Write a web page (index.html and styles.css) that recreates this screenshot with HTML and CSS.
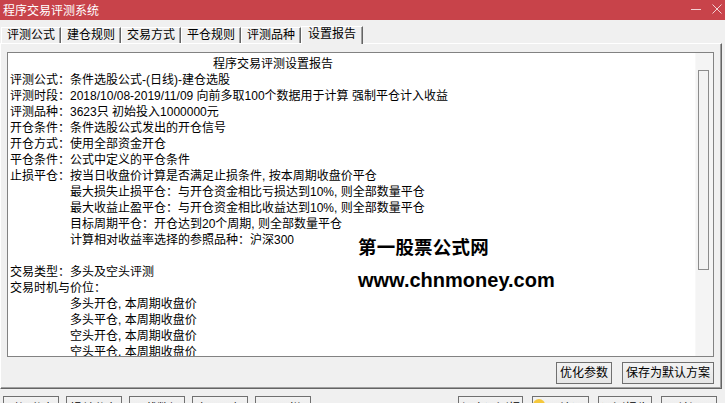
FILE: index.html
```html
<!DOCTYPE html>
<html lang="zh-CN">
<head>
    <meta charset="UTF-8">
    <title>程序交易评测系统</title>
    <link rel="stylesheet" href="styles.css">
</head>
<body>

<div class="window">
    <div class="titlebar">
        <span class="title">程序交易评测系统</span>
        <div class="winbtns">
            <svg width="11" height="11" viewBox="0 0 11 11"><path d="M0 5.5H10" stroke="#f3d2d4" stroke-width="1"/></svg>
            <svg width="10" height="11" viewBox="0 0 10 11"><path d="M0.5 0.5L9.5 9.5M9.5 0.5L0.5 9.5" stroke="#f3d2d4" stroke-width="1"/></svg>
        </div>
    </div>

    <div class="tabs">
        <div class="tab">评测公式</div>
        <div class="tab">建仓规则</div>
        <div class="tab">交易方式</div>
        <div class="tab">平仓规则</div>
        <div class="tab">评测品种</div>
        <div class="tab active">设置报告</div>
    </div>

    <div class="panel">
        <div class="report">
            <div class="report-text">
                <div class="line heading">程序交易评测设置报告</div>
                <div class="line">评测公式：条件选股公式-(日线)-建仓选股</div>
                <div class="line">评测时段：2018/10/08-2019/11/09 向前多取100个数据用于计算 强制平仓计入收益</div>
                <div class="line">评测品种：3623只 初始投入1000000元</div>
                <div class="line">开仓条件：条件选股公式发出的开仓信号</div>
                <div class="line">开仓方式：使用全部资金开仓</div>
                <div class="line">平仓条件：公式中定义的平仓条件</div>
                <div class="line">止损平仓：按当日收盘价计算是否满足止损条件, 按本周期收盘价平仓</div>
                <div class="line indent">最大损失止损平仓：与开仓资金相比亏损达到10%, 则全部数量平仓</div>
                <div class="line indent">最大收益止盈平仓：与开仓资金相比收益达到10%, 则全部数量平仓</div>
                <div class="line indent">目标周期平仓：开仓达到20个周期, 则全部数量平仓</div>
                <div class="line indent">计算相对收益率选择的参照品种：沪深300</div>
                <div class="line">&nbsp;</div>
                <div class="line">交易类型：多头及空头评测</div>
                <div class="line">交易时机与价位：</div>
                <div class="line indent">多头开仓, 本周期收盘价</div>
                <div class="line indent">多头平仓, 本周期收盘价</div>
                <div class="line indent">空头开仓, 本周期收盘价</div>
                <div class="line indent">空头平仓, 本周期收盘价</div>
            </div>
            <div class="scrollbar">
                <div class="thumb"></div>
            </div>
            <div class="watermark">
                <div class="wm-name">第一股票公式网</div>
                <div class="wm-url">www.chnmoney.com</div>
            </div>
        </div>
        <div class="panel-actions">
            <button class="btn btn-opt">优化参数</button>
            <button class="btn btn-save">保存为默认方案</button>
        </div>
    </div>

    <div class="footer">
        <div class="footer-left">
            <button class="btn fbtn">时间分布</button>
            <button class="btn fbtn">损益分布</button>
            <button class="btn fbtn">下载数据</button>
            <button class="btn fbtn">交易明细</button>
            <button class="btn fbtn">工具栏</button>
        </div>
        <div class="footer-right">
            <button class="btn fbtn w65">组合评测报告</button>
            <button class="btn fbtn w57"><span class="dot"></span>开始评测</button>
            <button class="btn fbtn w54">评测报告</button>
            <button class="btn fbtn">关闭</button>
        </div>
    </div>
</div>

</body>
</html>
```

FILE: styles.css
```css
body {
    margin: 0;
    background-color: #f0f0f0;
    font-family: "Liberation Sans", "Noto Sans CJK SC", sans-serif;
    font-size: 12px;
    color: #000;
    overflow: hidden;
}
.window {
    width: 725px;
    height: 403px;
    overflow: hidden;
}
.titlebar {
    height: 20px;
    background-color: #c8434a;
    color: #fff;
    display: flex;
    justify-content: space-between;
    align-items: center;
    padding: 0 3px 0 3px;
}
.title {
    line-height: 20px;
    margin-top: 1px;
}
.winbtns {
    display: flex;
    align-items: center;
    gap: 10px;
    margin-top: -2px;
}
.tabs {
    height: 23px;
    display: flex;
    align-items: flex-end;
    padding-left: 1px;
}
.tab {
    height: 15px;
    line-height: 15px;
    padding: 0 5px;
    border-left: 1px solid #fff;
    border-top: 1px solid #fff;
    border-right: 1px solid #646464;
    box-shadow: inset -1px 0 #a0a0a0;
    white-space: nowrap;
}
.tab.active {
    height: 17px;
    line-height: 15px;
    padding: 0 6px;
    margin-bottom: -1px;
    background-color: #f0f0f0;
    position: relative;
}
.panel {
    height: 344px;
    width: 720px;
    border-top: 1px solid #fff;
    border-left: 1px solid #fff;
    border-right: 1px solid #646464;
    border-bottom: 1px solid #646464;
    box-shadow: inset -1px -1px #a0a0a0;
    padding: 8px 7px 4px 6px;
    box-sizing: border-box;
    width: 722px;
    height: 346px;
}
.report {
    position: relative;
    height: 305px;
    border: 1px solid #828282;
    box-sizing: border-box;
    background-color: #fff;
    display: flex;
}
.report-text {
    flex: 1;
    padding: 3px 0 0 2px;
    overflow: hidden;
}
.line {
    height: 16px;
    line-height: 16px;
    white-space: nowrap;
}
.line.heading {
    padding-left: 203px;
}
.line.indent {
    padding-left: 60px;
}
.scrollbar {
    width: 18px;
    background-color: #f4f4f4;
    border-left: 1px solid #f8f8f8;
    box-sizing: border-box;
    padding: 17px 0 0 2px;
}
.thumb {
    width: 11px;
    height: 200px;
    box-sizing: border-box;
    border: 1px solid #8c8c8c;
    background-color: #f3f3f3;
}
.watermark {
    position: absolute;
    left: 350px;
    top: 176px;
    line-height: 34px;
    font-weight: bold;
    pointer-events: none;
}
.wm-name {
    font-family: "Noto Sans CJK SC", sans-serif;
    font-size: 18.5px;
    letter-spacing: 0.2px;
}
.wm-url {
    font-family: "Liberation Sans", sans-serif;
    font-size: 20px;
}
.panel-actions {
    display: flex;
    justify-content: flex-end;
    gap: 10px;
    margin-top: 5px;
}
.btn {
    height: 22px;
    padding: 0;
    border: 1px solid #707070;
    background: linear-gradient(#f3f3f3, #e6e6e6);
    font-family: "Liberation Sans", "Noto Sans CJK SC", sans-serif;
    font-size: 12px;
    color: #000;
    line-height: 20px;
    box-sizing: border-box;
}
.btn-opt {
    width: 56px;
}
.btn-save {
    width: 92px;
}
.footer {
    display: flex;
    justify-content: space-between;
    padding: 7px 8px 0 3px;
}
.footer-left,
.footer-right {
    display: flex;
    gap: 7px;
}
.footer-right {
    gap: 9px;
}
.fbtn {
    width: 56px;
    height: 22px;
    line-height: 24px;
    position: relative;
}
.w65 {
    width: 65px;
}
.w57 {
    width: 57px;
}
.w54 {
    width: 54px;
}
.dot {
    display: inline-block;
    width: 12px;
    height: 12px;
    border-radius: 50%;
    background-color: #f5c83c;
    vertical-align: top;
    margin: 2px 2px 0 -4px;
}
```
